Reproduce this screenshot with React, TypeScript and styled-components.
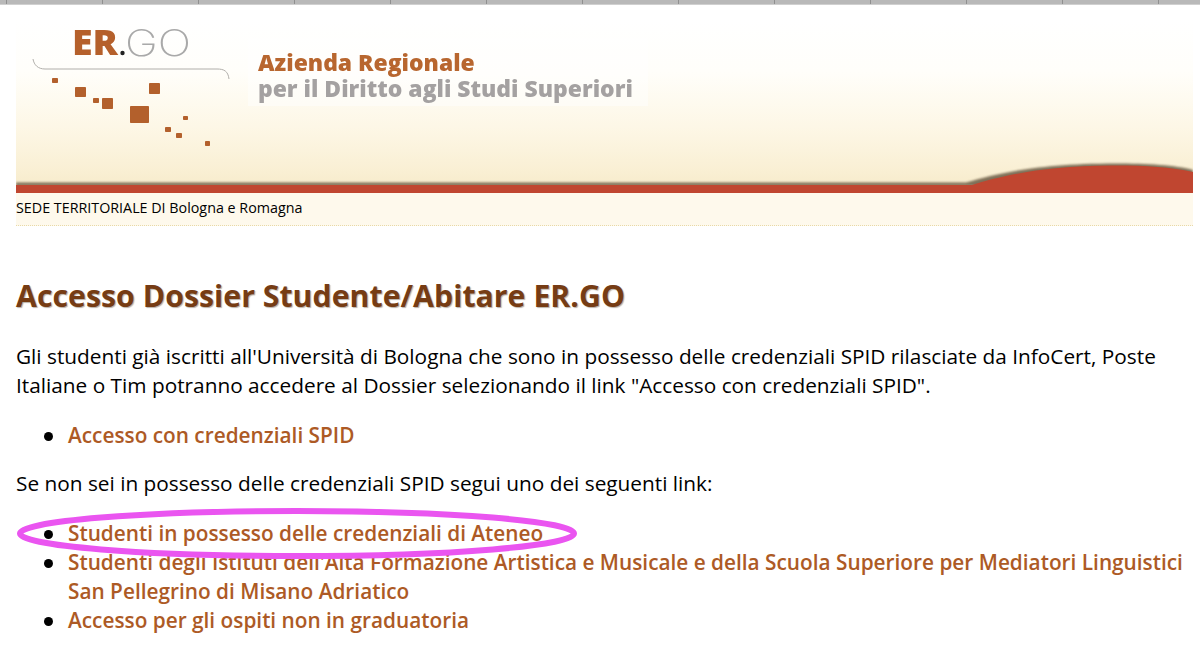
import React from "react";
import styled, { createGlobalStyle } from "styled-components";

const Global = createGlobalStyle`
  html, body { margin: 0; padding: 0; background: #fff; }
  body { font-family: "Open Sans", "Liberation Sans", sans-serif; color: #000; overflow: hidden; }
`;

const Page = styled.div`
  position: relative;
  width: 1200px;
  height: 669px;
  overflow: hidden;
`;

const TopStrip = styled.div`
  height: 4px;
  background: #b9b9b9;
  border-bottom: 1px solid #d0d0d0;
  display: flex;
  padding-left: 6px;
`;

const StripCell = styled.span`
  flex: 0 0 96px;
  box-sizing: border-box;
  border-left: 1px solid #8f8f8f;
`;

const Main = styled.main`
  padding: 15px 7px 0 16px;
`;

const Banner = styled.header`
  position: relative;
  height: 173px;
  background: linear-gradient(to bottom, #ffffff 0%, #fffefa 30%, #fdf7e6 62%, #f9efd3 88%, #f6e9c8 100%);
  display: flex;
  align-items: flex-start;
`;

const LogoMark = styled.svg`
  flex: none;
  width: 232px;
  height: 173px;
  overflow: visible;
  filter: blur(0.3px);
`;

const TitleBlock = styled.div`
  margin: 18px 0 0 0;
  padding: 12px 17px 0 10px;
  height: 56px;
  width: 373px;
  background: rgba(255, 255, 255, 0.45);
  font-weight: 800;
  font-size: 22.9px;
  line-height: 26px;
  filter: blur(0.35px);
`;

const TitleLine = styled.div<{ $tone: "brand" | "grey" }>`
  color: ${(p) => (p.$tone === "brand" ? "#b8662f" : "#a4a1a1")};
  white-space: nowrap;
`;

const Swoosh = styled.svg`
  position: absolute;
  left: 0;
  right: 0;
  bottom: 0;
  width: 100%;
  height: 40px;
`;

const SedeBar = styled.div`
  height: 34px;
  box-sizing: border-box;
  background: #fef9ec;
  border-top: 1px dotted #e8a060;
  border-bottom: 1px dotted #e8d9a8;
  margin-top: -1px;
  font-size: 14.3px;
  line-height: 30px;
  white-space: nowrap;
`;

const Heading = styled.h1`
  margin: 52px 0 0;
  font-size: 30.3px;
  line-height: 36px;
  font-weight: 700;
  color: #763c14;
  text-shadow: 1px 1px 1px #b9b1a8;
  white-space: nowrap;
`;

const Paragraph = styled.p<{ $top: number }>`
  margin: ${(p) => p.$top}px 0 0;
  font-size: 20.8px;
  line-height: 28.8px;
`;

const LinkList = styled.ul<{ $top: number }>`
  margin: ${(p) => p.$top}px 0 0;
  padding: 0 0 0 52px;
  list-style: none;
  font-size: 20.8px;
  line-height: 28.8px;
`;

const LinkItem = styled.li`
  position: relative;
  &::before {
    content: "";
    position: absolute;
    left: -24px;
    top: 11px;
    width: 9px;
    height: 9px;
    border-radius: 50%;
    background: #000;
  }
`;

const StyledLink = styled.a`
  color: #ad5a25;
  font-weight: 600;
  text-decoration: none;
`;

const Highlight = styled.svg`
  position: absolute;
  left: 16px;
  top: 506px;
  width: 564px;
  height: 56px;
  pointer-events: none;
`;

const squares: [number, number, number, number][] = [
  [52, 78, 6, 5], [75, 87, 11, 10], [93, 98, 6, 5], [102, 98, 11, 11], [149, 83, 11, 11],
  [130, 106, 19, 17], [183, 116, 5, 4], [165, 127, 6, 5], [176, 133, 6, 5], [205, 141, 5, 5],
];

export default function App() {
  return (
    <Page>
      <Global />
      <TopStrip>
        {Array.from({ length: 13 }).map((_, i) => (
          <StripCell key={i} />
        ))}
      </TopStrip>
      <Main>
        <Banner>
          <LogoMark viewBox="0 0 232 173" aria-label="ER.GO">
            <g transform="translate(-16 -20)">
              <text x="72" y="55" fontFamily="Open Sans" fontWeight="800" fontSize="36" fill="#b5602b" textLength="46" lengthAdjust="spacingAndGlyphs">ER</text>
              <circle cx="122.500" cy="53" r="2.200" fill="#222" />
              <text x="125" y="55.500" fontFamily="Inter" fontWeight="200" fontSize="37" fill="#a9a9a9" textLength="66" lengthAdjust="spacingAndGlyphs">GO</text>
              <path d="M33 59c1 6 5 10 12 10h172c7 0 11 2 12 10" fill="none" stroke="#b0aeaa" strokeWidth="1" />
              {squares.map(([x, y, w, h], i) => (
                <rect key={i} x={x} y={y} width={w} height={h} rx="0.800" fill="#b3602c" />
              ))}
            </g>
          </LogoMark>
          <TitleBlock>
            <TitleLine $tone="brand">Azienda Regionale</TitleLine>
            <TitleLine $tone="grey">per il Diritto agli Studi Superiori</TitleLine>
          </TitleBlock>
          <Swoosh viewBox="0 0 1177 40" preserveAspectRatio="none">
            <defs>
              <filter id="soft" x="-5%" y="-50%" width="110%" height="200%">
                <feGaussianBlur stdDeviation="0.900" />
              </filter>
            </defs>
            <path d="M0 29.500H950C980 21 1020 10.500 1100 10.500C1130 10.500 1160 12 1177 17V33H0Z" fill="#6b5b44" opacity="0.85" filter="url(#soft)" />
            <path d="M0 32H956C985 23 1030 12 1100 12.500C1130 12.500 1155 14 1177 19V40H0Z" fill="#c04630" />
          </Swoosh>
        </Banner>
        <SedeBar>SEDE TERRITORIALE DI Bologna e Romagna</SedeBar>
        <Heading>Accesso Dossier Studente/Abitare ER.GO</Heading>
        <Paragraph $top={28}>
          Gli studenti già iscritti all'Università di Bologna che sono in possesso delle credenziali SPID rilasciate da InfoCert, Poste Italiane o Tim potranno accedere al Dossier selezionando il link "Accesso con credenziali SPID".
        </Paragraph>
        <LinkList $top={21}>
          <LinkItem><StyledLink>Accesso con credenziali SPID</StyledLink></LinkItem>
        </LinkList>
        <Paragraph $top={20}>Se non sei in possesso delle credenziali SPID segui uno dei seguenti link:</Paragraph>
        <LinkList $top={21}>
          <LinkItem><StyledLink>Studenti in possesso delle credenziali di Ateneo</StyledLink></LinkItem>
          <LinkItem><StyledLink>Studenti degli Istituti dell'Alta Formazione Artistica e Musicale e della Scuola Superiore per Mediatori Linguistici San Pellegrino di Misano Adriatico</StyledLink></LinkItem>
          <LinkItem><StyledLink>Accesso per gli ospiti non in graduatoria</StyledLink></LinkItem>
        </LinkList>
      </Main>
      <Highlight viewBox="0 0 564 56">
        <ellipse cx="281" cy="27.500" rx="277" ry="22.500" fill="none" stroke="#ea55f0" strokeWidth="6" />
      </Highlight>
    </Page>
  );
}
